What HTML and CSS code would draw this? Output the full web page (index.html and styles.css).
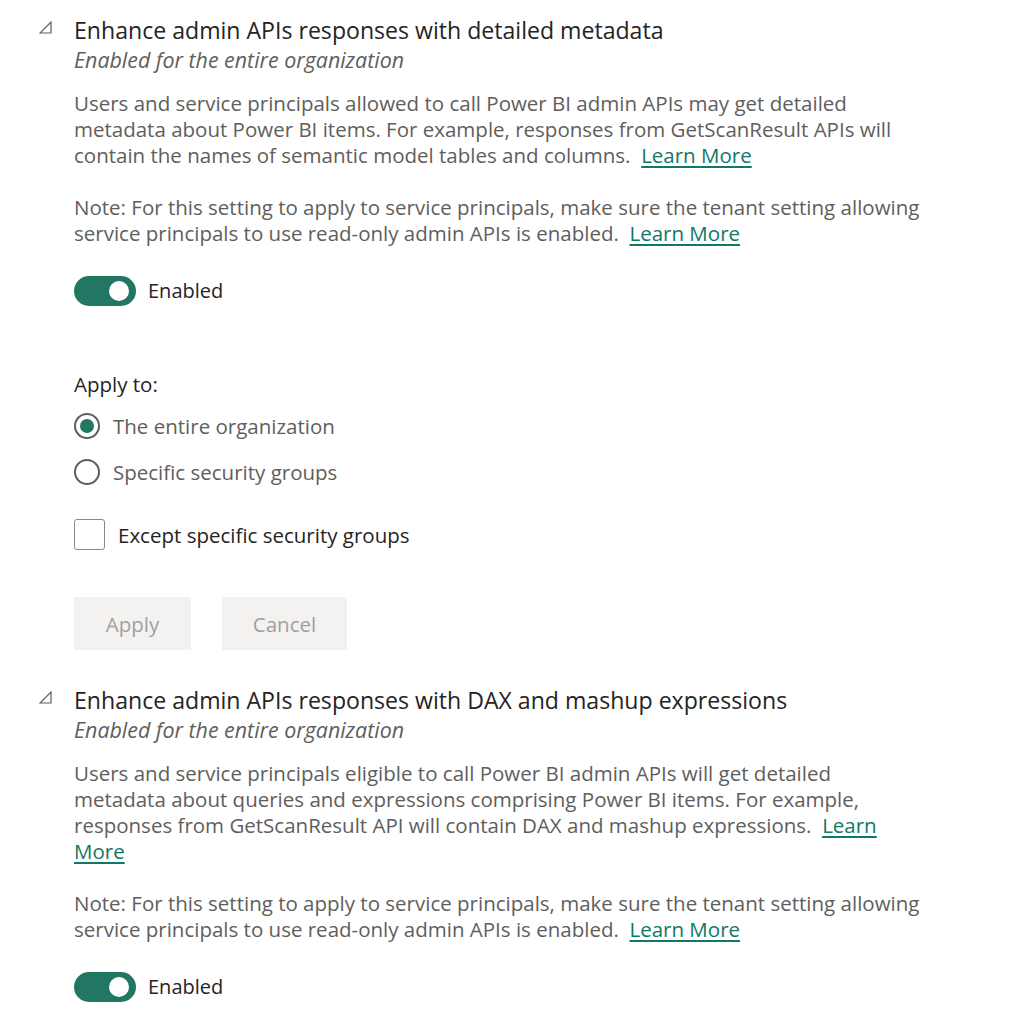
FILE: index.html
```html
<!DOCTYPE html>
<html lang="en">
<head>
<meta charset="utf-8">
<title>Admin API settings</title>
<link rel="stylesheet" href="styles.css">
</head>
<body>
<main class="settings">
  <section class="setting">
    <div class="head">
      <svg class="caret" viewBox="0 0 13 13" width="13" height="13"><path d="M12 1 L12 12 L1 12 Z" fill="none" stroke="#605e5c" stroke-width="1.2" stroke-linejoin="miter"/></svg>
      <div class="head-text">
        <h2 class="title">Enhance admin APIs responses with detailed metadata</h2>
        <div class="status">Enabled for the entire organization</div>
      </div>
    </div>
    <div class="body">
      <p class="desc">Users and service principals allowed to call Power BI admin APIs may get detailed<br>metadata about Power BI items. For example, responses from GetScanResult APIs will<br>contain the names of semantic model tables and columns.&nbsp; <a href="#">Learn More</a></p>
      <p class="desc">Note: For this setting to apply to service principals, make sure the tenant setting allowing<br>service principals to use read-only admin APIs is enabled.&nbsp; <a href="#">Learn More</a></p>
      <div class="toggle-row">
        <span class="toggle"><span class="knob"></span></span>
        <span class="toggle-label">Enabled</span>
      </div>
      <div class="apply">
        <div class="apply-label">Apply to:</div>
        <div class="radios">
          <div class="radio-row"><span class="radio checked"></span><span class="opt">The entire organization</span></div>
          <div class="radio-row"><span class="radio"></span><span class="opt">Specific security groups</span></div>
        </div>
        <div class="check-row"><span class="checkbox"></span><span class="opt dark">Except specific security groups</span></div>
        <div class="buttons">
          <button class="btn apply-btn" disabled>Apply</button>
          <button class="btn cancel-btn" disabled>Cancel</button>
        </div>
      </div>
    </div>
  </section>

  <section class="setting second">
    <div class="head">
      <svg class="caret" viewBox="0 0 13 13" width="13" height="13"><path d="M12 1 L12 12 L1 12 Z" fill="none" stroke="#605e5c" stroke-width="1.2" stroke-linejoin="miter"/></svg>
      <div class="head-text">
        <h2 class="title">Enhance admin APIs responses with DAX and mashup expressions</h2>
        <div class="status">Enabled for the entire organization</div>
      </div>
    </div>
    <div class="body">
      <p class="desc">Users and service principals eligible to call Power BI admin APIs will get detailed<br>metadata about queries and expressions comprising Power BI items. For example,<br>responses from GetScanResult API will contain DAX and mashup expressions.&nbsp; <a href="#">Learn<br>More</a></p>
      <p class="desc">Note: For this setting to apply to service principals, make sure the tenant setting allowing<br>service principals to use read-only admin APIs is enabled.&nbsp; <a href="#">Learn More</a></p>
      <div class="toggle-row">
        <span class="toggle"><span class="knob"></span></span>
        <span class="toggle-label">Enabled</span>
      </div>
    </div>
  </section>
</main>
</body>
</html>
```
FILE: styles.css
```css
html, body {
  margin: 0;
  padding: 0;
  background: #ffffff;
}
body {
  font-family: "Open Sans", "Noto Sans", "Liberation Sans", sans-serif;
  color: #252423;
}
.settings {
  padding: 15px 0 0 39px;
}
.setting.second {
  margin-top: 35px;
}
.head {
  display: flex;
  align-items: flex-start;
}
.caret {
  flex: none;
  margin-top: 6px;
  width: 13px;
  height: 13px;
}
.head-text {
  margin-left: 22px;
}
.title {
  margin: 0;
  font-size: 23.1px;
  font-weight: 400;
  line-height: 30px;
  color: #252423;
}
.status {
  font-size: 21.4px;
  font-style: italic;
  line-height: 30px;
  color: #605e5c;
}
.body {
  padding-left: 35px;
  padding-top: 15px;
}
.desc {
  margin: 0 0 26px 0;
  font-size: 20.5px;
  line-height: 26px;
  color: #605e5c;
}
.desc a {
  color: #117865;
  text-decoration: underline;
  text-underline-offset: 3px;
}
.toggle-row {
  display: flex;
  align-items: center;
  margin-top: 29px;
  height: 31px;
}
.toggle {
  position: relative;
  width: 62px;
  height: 30px;
  border-radius: 15px;
  background: #227762;
  display: inline-block;
  flex: none;
}
.knob {
  position: absolute;
  top: 5px;
  right: 7px;
  width: 20px;
  height: 20px;
  border-radius: 50%;
  background: #ffffff;
}
.toggle-label {
  margin-left: 12px;
  font-size: 20px;
  color: #252423;
}
.apply {
  margin-top: 65px;
}
.apply-label {
  font-size: 20.5px;
  line-height: 26px;
  color: #252423;
}
.radios {
  margin-top: 6px;
}
.radio-row {
  display: flex;
  align-items: center;
  height: 46px;
}
.radio {
  box-sizing: border-box;
  width: 26px;
  height: 26px;
  border: 2px solid #605e5c;
  border-radius: 50%;
  position: relative;
  flex: none;
}
.radio.checked::after {
  content: "";
  position: absolute;
  left: 4px;
  top: 4px;
  width: 14px;
  height: 14px;
  border-radius: 50%;
  background: #227762;
}
.opt {
  margin-left: 13px;
  font-size: 20.5px;
  color: #605e5c;
}
.opt.dark {
  color: #252423;
}
.check-row {
  display: flex;
  align-items: center;
  margin-top: 24px;
  height: 31px;
}
.checkbox {
  box-sizing: border-box;
  width: 31px;
  height: 31px;
  border: 1.5px solid #8a8886;
  border-radius: 3px;
  flex: none;
}
.check-row .opt {
  margin-left: 13px;
}
.buttons {
  display: flex;
  gap: 31px;
  margin-top: 47px;
}
.btn {
  height: 53px;
  border: none;
  background: #f3f2f1;
  color: #a19f9d;
  font-family: inherit;
  font-size: 20.5px;
  padding: 0;
}
.apply-btn {
  width: 117px;
}
.cancel-btn {
  width: 125px;
}
```
